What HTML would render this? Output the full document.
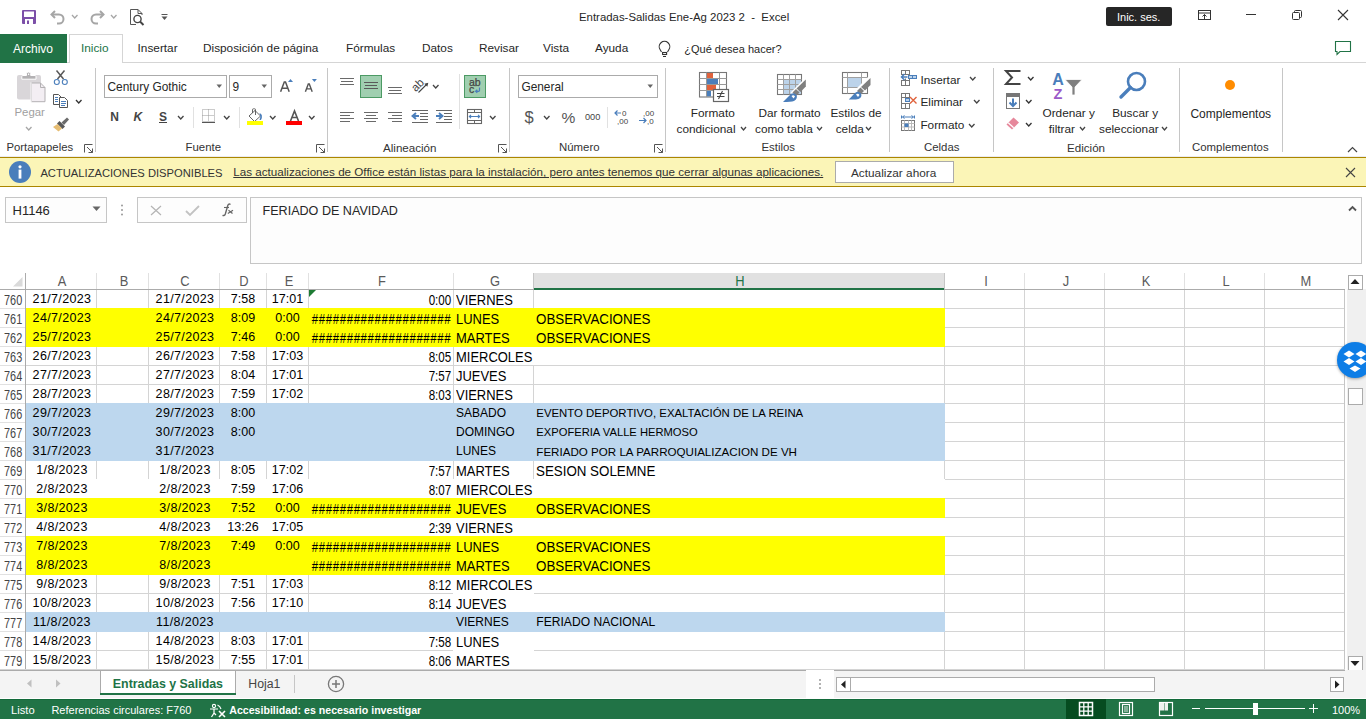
<!DOCTYPE html>
<html><head><meta charset="utf-8"><title>Excel</title>
<style>
html,body{margin:0;padding:0;}
body{width:1366px;height:719px;overflow:hidden;position:relative;background:#fff;font-family:"Liberation Sans", sans-serif;}
.t{position:absolute;white-space:pre;line-height:1;}
.r{position:absolute;box-sizing:content-box;}
.s{position:absolute;overflow:visible;}
</style></head><body>
<div class="r" style="left:0px;top:0px;width:1366px;height:34px;background:#ffffff;"></div>
<svg class="s" style="left:22px;top:10px" width="14" height="14" viewBox="0 0 14 14"><rect x="0" y="0" width="14" height="14" rx="1" fill="#7c4fa8"/><rect x="2" y="1.5" width="10" height="5.5" fill="#fff"/><rect x="3" y="9" width="8" height="5" fill="#fff"/><rect x="5" y="10.5" width="2" height="3.5" fill="#7c4fa8"/></svg>
<svg class="s" style="left:50px;top:9px" width="16" height="15" viewBox="0 0 16 15"><path d="M5 2 L1.5 5.5 L5 9" fill="none" stroke="#a6a6a6" stroke-width="2"/><path d="M2 5.5 H9 A4.5 4.5 0 0 1 9 14.5 H7" fill="none" stroke="#a6a6a6" stroke-width="2"/></svg>
<svg class="s" style="left:71px;top:14px" width="7.5" height="5" viewBox="0 0 7.5 5"><polyline points="1,1 3.75,4 6.5,1" fill="none" stroke="#a6a6a6" stroke-width="1.3"/></svg>
<svg class="s" style="left:89px;top:9px" width="16" height="15" viewBox="0 0 16 15"><path d="M11 2 L14.5 5.5 L11 9" fill="none" stroke="#a6a6a6" stroke-width="2"/><path d="M14 5.5 H7 A4.5 4.5 0 0 0 7 14.5 H9" fill="none" stroke="#a6a6a6" stroke-width="2"/></svg>
<svg class="s" style="left:110px;top:14px" width="7.5" height="5" viewBox="0 0 7.5 5"><polyline points="1,1 3.75,4 6.5,1" fill="none" stroke="#a6a6a6" stroke-width="1.3"/></svg>
<svg class="s" style="left:129px;top:8px" width="17" height="18" viewBox="0 0 17 18"><path d="M1.5 1.5 H9 L13 5.5 V7 M1.5 1.5 V16.5 H7" fill="none" stroke="#555" stroke-width="1"/><path d="M9 1.5 V5.5 H13" fill="none" stroke="#555" stroke-width="1"/><circle cx="8.5" cy="11" r="3.6" fill="none" stroke="#444" stroke-width="1.4"/><path d="M11 13.5 L14.5 17" stroke="#444" stroke-width="2"/></svg>
<svg class="s" style="left:161px;top:13px" width="8" height="8" viewBox="0 0 8 8"><rect x="0.5" y="1" width="6" height="1" fill="#555"/><path d="M0.5 3.5 H6.5 L3.5 7 Z" fill="#555"/></svg>
<div class="t" style="left:579px;top:11.65px;font-size:11.4px;color:#262626;">Entradas-Salidas Ene-Ag 2023 2  -  Excel</div>
<div class="r" style="left:1106px;top:7px;width:66px;height:19px;background:#262626;border-radius:2px;"></div>
<div class="t" style="left:1117px;top:11.69px;font-size:11px;color:#ffffff;">Inic. ses.</div>
<svg class="s" style="left:1197px;top:9px" width="15" height="12" viewBox="0 0 15 12"><rect x="1.5" y="1.5" width="12" height="9" fill="none" stroke="#333" stroke-width="1"/><line x1="1.5" y1="4" x2="13.5" y2="4" stroke="#333"/><path d="M7.5 10 V5.5 M5.5 7.5 L7.5 5.5 L9.5 7.5" fill="none" stroke="#333"/></svg>
<div class="r" style="left:1246px;top:14px;width:10px;height:1px;background:#333;"></div>
<svg class="s" style="left:1291px;top:9px" width="12" height="12" viewBox="0 0 12 12"><rect x="1.5" y="3.5" width="7" height="7" rx="1" fill="none" stroke="#333"/><path d="M3.5 3.5 V2.5 A1 1 0 0 1 4.5 1.5 H9.5 A1 1 0 0 1 10.5 2.5 V7.5 A1 1 0 0 1 9.5 8.5 H8.5" fill="none" stroke="#333"/></svg>
<svg class="s" style="left:1337px;top:9px" width="12" height="12" viewBox="0 0 12 12"><path d="M1 1 L11 11 M11 1 L1 11" stroke="#333" stroke-width="1.1"/></svg>
<div class="r" style="left:0px;top:34px;width:1366px;height:29px;background:#ffffff;"></div>
<div class="r" style="left:0px;top:62px;width:1366px;height:1px;background:#d5d5d5;"></div>
<div class="r" style="left:0px;top:34px;width:67px;height:29px;background:#217346;"></div>
<div class="t" style="left:13px;top:42.84px;font-size:12px;color:#ffffff;">Archivo</div>
<div class="r" style="left:69px;top:34px;width:52px;height:29px;background:#fff;border:1px solid #d5d5d5;border-bottom:none;"></div>
<div class="t" style="left:81px;top:43.01px;font-size:11.8px;color:#217346;">Inicio</div>
<div class="t" style="left:137.6px;top:43.01px;font-size:11.8px;color:#262626;">Insertar</div>
<div class="t" style="left:203px;top:43.01px;font-size:11.8px;color:#262626;">Disposición de página</div>
<div class="t" style="left:346px;top:43.01px;font-size:11.8px;color:#262626;">Fórmulas</div>
<div class="t" style="left:422px;top:43.01px;font-size:11.8px;color:#262626;">Datos</div>
<div class="t" style="left:479px;top:43.01px;font-size:11.8px;color:#262626;">Revisar</div>
<div class="t" style="left:543px;top:43.01px;font-size:11.8px;color:#262626;">Vista</div>
<div class="t" style="left:595px;top:43.01px;font-size:11.8px;color:#262626;">Ayuda</div>
<svg class="s" style="left:656px;top:40px" width="18" height="18" viewBox="0 0 18 18"><path d="M5.5 12 L4.2 9.8 A5.3 5.3 0 1 1 12.8 9.8 L11.5 12" fill="none" stroke="#333" stroke-width="1.1"/><rect x="6.6" y="12.5" width="4" height="2" fill="none" stroke="#333" stroke-width="1.1"/><rect x="7" y="16" width="3" height="1" fill="#333"/></svg>
<div class="t" style="left:684.3px;top:43.69px;font-size:11px;color:#262626;">¿Qué desea hacer?</div>
<svg class="s" style="left:1334px;top:40px" width="18" height="16" viewBox="0 0 18 16"><path d="M1.5 1.5 H16.5 V11.5 H6 L3 14.5 V11.5 H1.5 Z" fill="none" stroke="#217346" stroke-width="1.1"/></svg>
<div class="r" style="left:0px;top:63px;width:1366px;height:93px;background:#ffffff;"></div>
<div class="r" style="left:95px;top:68px;width:1px;height:84px;background:#c6c6c6;"></div>
<div class="r" style="left:327px;top:68px;width:1px;height:84px;background:#c6c6c6;"></div>
<div class="r" style="left:509px;top:68px;width:1px;height:84px;background:#c6c6c6;"></div>
<div class="r" style="left:665px;top:68px;width:1px;height:84px;background:#c6c6c6;"></div>
<div class="r" style="left:889px;top:68px;width:1px;height:84px;background:#c6c6c6;"></div>
<div class="r" style="left:993px;top:68px;width:1px;height:84px;background:#c6c6c6;"></div>
<div class="r" style="left:1179px;top:68px;width:1px;height:84px;background:#c6c6c6;"></div>
<div class="r" style="left:1282px;top:68px;width:1px;height:84px;background:#c6c6c6;"></div>
<div class="t" style="left:6.5px;top:142.43px;font-size:11.3px;color:#333;">Portapapeles</div>
<svg class="s" style="left:84px;top:144px" width="9" height="9" viewBox="0 0 9 9"><path d="M0.5 0.5 H8.5 V8.5 H0.5 Z" fill="none" stroke="#666" stroke-width="0" /><path d="M0.5 8.5 V0.5 H8.5 M8.5 8.5 L3 3 M8.5 4.5 V8.5 H4.5" fill="none" stroke="#555" stroke-width="1"/></svg>
<div class="t" style="left:185.5px;top:142.35px;font-size:11.4px;color:#333;">Fuente</div>
<svg class="s" style="left:316px;top:144px" width="9" height="9" viewBox="0 0 9 9"><path d="M0.5 0.5 H8.5 V8.5 H0.5 Z" fill="none" stroke="#666" stroke-width="0" /><path d="M0.5 8.5 V0.5 H8.5 M8.5 8.5 L3 3 M8.5 4.5 V8.5 H4.5" fill="none" stroke="#555" stroke-width="1"/></svg>
<div class="t" style="left:383px;top:142.18px;font-size:11.6px;color:#333;">Alineación</div>
<svg class="s" style="left:498px;top:144px" width="9" height="9" viewBox="0 0 9 9"><path d="M0.5 0.5 H8.5 V8.5 H0.5 Z" fill="none" stroke="#666" stroke-width="0" /><path d="M0.5 8.5 V0.5 H8.5 M8.5 8.5 L3 3 M8.5 4.5 V8.5 H4.5" fill="none" stroke="#555" stroke-width="1"/></svg>
<div class="t" style="left:559px;top:142.35px;font-size:11.4px;color:#333;">Número</div>
<svg class="s" style="left:654px;top:144px" width="9" height="9" viewBox="0 0 9 9"><path d="M0.5 0.5 H8.5 V8.5 H0.5 Z" fill="none" stroke="#666" stroke-width="0" /><path d="M0.5 8.5 V0.5 H8.5 M8.5 8.5 L3 3 M8.5 4.5 V8.5 H4.5" fill="none" stroke="#555" stroke-width="1"/></svg>
<div class="t" style="left:761.5px;top:142.35px;font-size:11.4px;color:#333;">Estilos</div>
<div class="t" style="left:924px;top:142.35px;font-size:11.4px;color:#333;">Celdas</div>
<div class="t" style="left:1067px;top:142.18px;font-size:11.6px;color:#333;">Edición</div>
<div class="t" style="left:1192px;top:142.35px;font-size:11.4px;color:#333;">Complementos</div>
<svg class="s" style="left:1347px;top:146px" width="11" height="7" viewBox="0 0 11 7"><polyline points="1,6 5.5,1.5 10,6" fill="none" stroke="#444" stroke-width="1.2"/></svg>
<svg class="s" style="left:16px;top:71px" width="31" height="32" viewBox="0 0 31 32"><rect x="1" y="4" width="24" height="24.6" rx="2" fill="#d9d6d9"/><path d="M5.8 8.2 V5.5 Q5.8 4.5 6.8 4.5 H10.5 V2.5 Q10.5 1 12.5 1 Q14.7 1 14.7 2.5 V4.5 H19 Q20 4.5 20 5.5 V8.2 Z" fill="#b3b1b3" stroke="#fff" stroke-width="1"/><rect x="12" y="2.5" width="1.2" height="1.5" fill="#fff"/><path d="M15.3 12 H24.5 L29 16.5 V30.7 H15.3 Z" fill="#f3eef3" stroke="#b3b1b3" stroke-width="1"/><path d="M24.5 12 V16.5 H29" fill="none" stroke="#b3b1b3" stroke-width="1"/><path d="M15 11.5 V31" stroke="#fff" stroke-width="1"/></svg>
<div class="t" style="left:14.5px;top:107.35px;font-size:11.4px;color:#a0a0a0;">Pegar</div>
<svg class="s" style="left:25px;top:126px" width="7.5" height="5" viewBox="0 0 7.5 5"><polyline points="1,1 3.75,4 6.5,1" fill="none" stroke="#a6a6a6" stroke-width="1.3"/></svg>
<svg class="s" style="left:53px;top:69px" width="15" height="16" viewBox="0 0 15 16"><path d="M3.5 1.5 L10.5 10 M11.5 1.5 L4.5 10" stroke="#595959" stroke-width="1.5"/><circle cx="3.8" cy="13" r="2.5" fill="#fff" stroke="#4a7ebb" stroke-width="1.1"/><circle cx="11.8" cy="13" r="2.5" fill="#fff" stroke="#4a7ebb" stroke-width="1.1"/></svg>
<svg class="s" style="left:52px;top:93px" width="17" height="16" viewBox="0 0 17 16"><path d="M1.5 1.5 H6.5 L9.5 4.5 V11.5 H1.5 Z" fill="#fff" stroke="#555" stroke-width="1"/><path d="M7.5 4.5 H12.5 L15.5 7.5 V14.5 H7.5 Z" fill="#fff" stroke="#555" stroke-width="1"/><rect x="3" y="4" width="3" height="1" fill="#4a7ebb"/><rect x="3" y="6" width="3" height="1" fill="#4a7ebb"/><rect x="3" y="8" width="3" height="1" fill="#4a7ebb"/><rect x="9" y="8" width="5" height="1" fill="#4a7ebb"/><rect x="9" y="10" width="5" height="1" fill="#4a7ebb"/><rect x="9" y="12" width="4" height="1" fill="#4a7ebb"/></svg>
<svg class="s" style="left:75px;top:99px" width="7.5" height="5" viewBox="0 0 7.5 5"><polyline points="1,1 3.75,4 6.5,1" fill="none" stroke="#333" stroke-width="1.3"/></svg>
<svg class="s" style="left:52px;top:116px" width="18" height="16" viewBox="0 0 18 16"><path d="M9.5 6.5 L15 1.5 L17 3.5 L12 9 Z" fill="#6b6b6b"/><path d="M7.5 5 L13 10.5 L10.5 13 L5 7.5 Z" fill="#595959"/><path d="M5.5 8 L10 12.5 L6.5 15.5 L1 11 Z" fill="#e6bd73"/></svg>
<div class="r" style="left:104px;top:75px;width:121px;height:21px;border:1px solid #ababab;background:#fff"></div>
<div class="t" style="left:107.5px;top:81.93px;font-size:11.9px;color:#262626;">Century Gothic</div>
<svg class="s" style="left:216px;top:84px" width="7" height="5" viewBox="0 0 7 5"><path d="M0.5 0.5 H6 L3.25 4 Z" fill="#666"/></svg>
<div class="r" style="left:229px;top:75px;width:41px;height:21px;border:1px solid #ababab;background:#fff"></div>
<div class="t" style="left:232.5px;top:81.93px;font-size:11.9px;color:#262626;">9</div>
<svg class="s" style="left:261px;top:84px" width="7" height="5" viewBox="0 0 7 5"><path d="M0.5 0.5 H6 L3.25 4 Z" fill="#666"/></svg>
<svg class="s" style="left:279px;top:77px" width="16" height="17" viewBox="0 0 16 17"><path d="M1.6 14.7 L5.3 5 H6.5 L10.2 14.7 M3.3 11.3 H8.5" fill="none" stroke="#555" stroke-width="1.5"/><path d="M9 5 L11.5 1.9 L14 5 Z" fill="#4a7ebb"/></svg>
<svg class="s" style="left:304px;top:77px" width="16" height="17" viewBox="0 0 16 17"><path d="M1.4 14.7 L4.3 7 H5.3 L8.2 14.7 M2.8 11.9 H6.8" fill="none" stroke="#555" stroke-width="1.4"/><path d="M7.9 2 H12.9 L10.4 5 Z" fill="#4a7ebb"/></svg>
<div class="t" style="left:110.3px;top:110.84px;font-size:12px;color:#444;font-weight:bold;">N</div>
<div class="t" style="left:133.5px;top:110.84px;font-size:12px;color:#444;font-weight:bold;font-style:italic;">K</div>
<div class="t" style="left:159px;top:110.84px;font-size:12px;color:#444;font-weight:bold;text-decoration:underline;">S</div>
<svg class="s" style="left:176.5px;top:115px" width="7.5" height="5" viewBox="0 0 7.5 5"><polyline points="1,1 3.75,4 6.5,1" fill="none" stroke="#444" stroke-width="1.3"/></svg>
<div class="r" style="left:193px;top:107px;width:1px;height:21px;background:#e1e1e1;"></div>
<svg class="s" style="left:201px;top:108px" width="16" height="16" viewBox="0 0 16 16"><rect x="1.5" y="1.5" width="12" height="12" fill="none" stroke="#999" stroke-dasharray="1,1"/><path d="M7.5 1.5 V13.5 M1.5 7.5 H13.5" stroke="#999" stroke-dasharray="1,1"/><line x1="1" y1="14.5" x2="14" y2="14.5" stroke="#555"/></svg>
<svg class="s" style="left:223px;top:115px" width="7.5" height="5" viewBox="0 0 7.5 5"><polyline points="1,1 3.75,4 6.5,1" fill="none" stroke="#444" stroke-width="1.3"/></svg>
<div class="r" style="left:239px;top:107px;width:1px;height:21px;background:#e1e1e1;"></div>
<svg class="s" style="left:246px;top:107px" width="19" height="19" viewBox="0 0 19 19"><path d="M9 3.5 L14.5 9 L8.5 14.5 L3 9 Z" fill="#fff" stroke="#555" stroke-width="0.9"/><path d="M6.5 6 V2.5 Q6.5 1.8 7.5 1.8 H8.5 Q9.5 1.8 9.5 2.5 V8" fill="none" stroke="#555" stroke-width="0.9"/><path d="M13.5 6 Q17.5 7.5 15 13 L13.5 13 Q15 10 13.5 6 Z" fill="#4a7ebb"/><rect x="1" y="14" width="16" height="4" fill="#ffff00"/></svg>
<svg class="s" style="left:269px;top:115px" width="7.5" height="5" viewBox="0 0 7.5 5"><polyline points="1,1 3.75,4 6.5,1" fill="none" stroke="#444" stroke-width="1.3"/></svg>
<svg class="s" style="left:285px;top:109px" width="18" height="17" viewBox="0 0 18 17"><path d="M5.5 12 L9.5 2 L13.5 12 M7 8.5 H12" fill="none" stroke="#555" stroke-width="1.6"/><rect x="1" y="12" width="16" height="4" fill="#ff0000"/></svg>
<svg class="s" style="left:307.5px;top:115px" width="7.5" height="5" viewBox="0 0 7.5 5"><polyline points="1,1 3.75,4 6.5,1" fill="none" stroke="#444" stroke-width="1.3"/></svg>
<div class="r" style="left:340px;top:78px;width:14px;height:1px;background:#6a6a6a;"></div>
<div class="r" style="left:341px;top:81px;width:12px;height:1px;background:#6a6a6a;"></div>
<div class="r" style="left:340px;top:84px;width:14px;height:1px;background:#6a6a6a;"></div>
<div class="r" style="left:360px;top:75px;width:20px;height:21px;background:#a0cfb0;border:1px solid #4c9a64"></div>
<div class="r" style="left:364px;top:82px;width:14px;height:1px;background:#5a5a5a;"></div>
<div class="r" style="left:365px;top:85px;width:12px;height:1px;background:#5a5a5a;"></div>
<div class="r" style="left:364px;top:88px;width:14px;height:1px;background:#5a5a5a;"></div>
<div class="r" style="left:388px;top:87px;width:14px;height:1px;background:#6a6a6a;"></div>
<div class="r" style="left:389px;top:90px;width:12px;height:1px;background:#6a6a6a;"></div>
<div class="r" style="left:388px;top:93px;width:14px;height:1px;background:#6a6a6a;"></div>
<svg class="s" style="left:410px;top:77px" width="22" height="17" viewBox="0 0 22 17"><text x="7.5" y="11.5" text-anchor="middle" font-family="Liberation Sans" font-size="11.5" fill="#444" transform="rotate(-45 7.8 7.8)">ab</text><path d="M8.5 15.5 L17 7" stroke="#444" stroke-width="1.1"/><path d="M18.3 5.8 L14.3 6.8 L17.3 9.8 Z" fill="#444"/></svg>
<svg class="s" style="left:432px;top:84px" width="7.5" height="5" viewBox="0 0 7.5 5"><polyline points="1,1 3.75,4 6.5,1" fill="none" stroke="#444" stroke-width="1.3"/></svg>
<div class="r" style="left:459px;top:74px;width:1px;height:55px;background:#e1e1e1;"></div>
<div class="r" style="left:464px;top:75px;width:20px;height:21px;background:#a0cfb0;border:1px solid #4c9a64"></div>
<svg class="s" style="left:466px;top:77px" width="18" height="18" viewBox="0 0 18 18"><text x="3" y="8.5" font-family="Liberation Sans" font-size="10.5" fill="#444" stroke="#444" stroke-width="0.25">ab</text><text x="3" y="16" font-family="Liberation Sans" font-size="10.5" fill="#444" stroke="#444" stroke-width="0.25">c</text><path d="M13.5 10.5 V13.5 Q13.5 14.3 12.5 14.3 H9.8 M11.3 12.8 L9.6 14.3 L11.3 15.8" fill="none" stroke="#4a7ebb" stroke-width="1.2"/></svg>
<div class="r" style="left:340px;top:112px;width:14px;height:1px;background:#6a6a6a;"></div>
<div class="r" style="left:340px;top:115px;width:10px;height:1px;background:#6a6a6a;"></div>
<div class="r" style="left:340px;top:118px;width:14px;height:1px;background:#6a6a6a;"></div>
<div class="r" style="left:340px;top:121px;width:10px;height:1px;background:#6a6a6a;"></div>
<div class="r" style="left:364px;top:112px;width:14px;height:1px;background:#6a6a6a;"></div>
<div class="r" style="left:366px;top:115px;width:10px;height:1px;background:#6a6a6a;"></div>
<div class="r" style="left:364px;top:118px;width:14px;height:1px;background:#6a6a6a;"></div>
<div class="r" style="left:366px;top:121px;width:10px;height:1px;background:#6a6a6a;"></div>
<div class="r" style="left:388px;top:112px;width:14px;height:1px;background:#6a6a6a;"></div>
<div class="r" style="left:392px;top:115px;width:10px;height:1px;background:#6a6a6a;"></div>
<div class="r" style="left:388px;top:118px;width:14px;height:1px;background:#6a6a6a;"></div>
<div class="r" style="left:392px;top:121px;width:10px;height:1px;background:#6a6a6a;"></div>
<div class="r" style="left:412px;top:110px;width:16px;height:1px;background:#666;"></div>
<div class="r" style="left:420px;top:113px;width:8px;height:1px;background:#666;"></div>
<div class="r" style="left:420px;top:116px;width:8px;height:1px;background:#666;"></div>
<div class="r" style="left:420px;top:119px;width:8px;height:1px;background:#666;"></div>
<div class="r" style="left:412px;top:122px;width:16px;height:1px;background:#666;"></div>
<svg class="s" style="left:411px;top:111px" width="9" height="10" viewBox="0 0 9 10"><path d="M8 5 H3 M5 2 L1.5 5 L5 8" fill="none" stroke="#4a7ebb" stroke-width="1.9"/></svg>
<div class="r" style="left:436px;top:110px;width:16px;height:1px;background:#666;"></div>
<div class="r" style="left:444px;top:113px;width:8px;height:1px;background:#666;"></div>
<div class="r" style="left:444px;top:116px;width:8px;height:1px;background:#666;"></div>
<div class="r" style="left:444px;top:119px;width:8px;height:1px;background:#666;"></div>
<div class="r" style="left:436px;top:122px;width:16px;height:1px;background:#666;"></div>
<svg class="s" style="left:435px;top:111px" width="9" height="10" viewBox="0 0 9 10"><path d="M1 5 H6 M4 2 L7.5 5 L4 8" fill="none" stroke="#4a7ebb" stroke-width="1.9"/></svg>
<svg class="s" style="left:466px;top:108px" width="17" height="17" viewBox="0 0 17 17"><rect x="1.5" y="1.5" width="14" height="14" fill="#fff" stroke="#666" stroke-width="1.1"/><path d="M1.5 4.5 H15.5 M1.5 12.5 H15.5 M8.5 1.5 V4.5 M8.5 12.5 V15.5" stroke="#666" stroke-width="1"/><path d="M3.5 8.5 H13.5 M5 6.8 L3.3 8.5 L5 10.2 M12 6.8 L13.7 8.5 L12 10.2" fill="none" stroke="#4a7ebb" stroke-width="1.1"/></svg>
<svg class="s" style="left:489px;top:115px" width="7.5" height="5" viewBox="0 0 7.5 5"><polyline points="1,1 3.75,4 6.5,1" fill="none" stroke="#444" stroke-width="1.3"/></svg>
<div class="r" style="left:518px;top:75px;width:138px;height:21px;border:1px solid #ababab;background:#fff"></div>
<div class="t" style="left:521.4px;top:81.93px;font-size:11.9px;color:#262626;">General</div>
<svg class="s" style="left:647px;top:84px" width="7" height="5" viewBox="0 0 7 5"><path d="M0.5 0.5 H6 L3.25 4 Z" fill="#666"/></svg>
<div class="t" style="left:524.5px;top:108.53px;font-size:16.5px;color:#555;">$</div>
<svg class="s" style="left:542.5px;top:115px" width="7.5" height="5" viewBox="0 0 7.5 5"><polyline points="1,1 3.75,4 6.5,1" fill="none" stroke="#444" stroke-width="1.3"/></svg>
<div class="t" style="left:561.5px;top:109.88px;font-size:15.5px;color:#555;">%</div>
<div class="t" style="left:585px;top:113.01px;font-size:9.2px;color:#444;">000</div>
<div class="r" style="left:607px;top:107px;width:1px;height:21px;background:#e1e1e1;"></div>
<svg class="s" style="left:614px;top:109px" width="17" height="16" viewBox="0 0 17 16"><text x="8" y="7" font-family="Liberation Sans" font-size="8" fill="#444">0</text><text x="3" y="14.5" font-family="Liberation Sans" font-size="8" fill="#444">,00</text><path d="M1 4 H7 M3.5 1.5 L1 4 L3.5 6.5" fill="none" stroke="#4a7ebb" stroke-width="1.2"/></svg>
<svg class="s" style="left:638px;top:109px" width="17" height="16" viewBox="0 0 17 16"><text x="5" y="7" font-family="Liberation Sans" font-size="8" fill="#444">,00</text><text x="9" y="14.5" font-family="Liberation Sans" font-size="8" fill="#444">,0</text><path d="M1 11.5 H8 M5.5 9 L8 11.5 L5.5 14" fill="none" stroke="#4a7ebb" stroke-width="1.2"/></svg>
<svg class="s" style="left:698px;top:71px" width="32" height="32" viewBox="0 0 32 32"><rect x="9" y="2" width="6" height="5.5" fill="#e0623c"/><rect x="9" y="8" width="11" height="5.5" fill="#4a7ebb"/><rect x="9" y="14" width="9" height="5.5" fill="#e0623c"/><rect x="9" y="20" width="4" height="5.5" fill="#4a7ebb"/><rect x="1.5" y="1.5" width="27" height="24.5" fill="none" stroke="#777" stroke-width="1.1"/><path d="M1.5 7.5 H28.5 M1.5 13.5 H28.5 M1.5 19.5 H28.5 M8.5 1.5 V26 M21.5 1.5 V26" stroke="#999" stroke-width="1" fill="none"/><rect x="15.5" y="18.5" width="15" height="12" fill="#fff" stroke="#666" stroke-width="1.2"/><path d="M19 22.5 H26.5 M19 25.5 H26.5 M24.5 20 L20.5 28" stroke="#444" stroke-width="1.1"/></svg>
<div class="t" style="left:690.8px;top:108.01px;font-size:11.8px;color:#262626;">Formato</div>
<div class="t" style="left:676.5px;top:124.01px;font-size:11.8px;color:#262626;">condicional</div>
<svg class="s" style="left:740px;top:126px" width="7" height="5" viewBox="0 0 7 5"><polyline points="1,1 3.5,4 6,1" fill="none" stroke="#444" stroke-width="1.3"/></svg>
<svg class="s" style="left:776px;top:72px" width="32" height="31" viewBox="0 0 32 31"><rect x="8" y="8" width="17" height="14" fill="#bcd3ea"/><rect x="1.5" y="2.5" width="24" height="20" fill="none" stroke="#777" stroke-width="1.1"/><path d="M1.5 7.5 H25.5 M1.5 12.5 H25.5 M1.5 17.5 H25.5 M7.5 2.5 V22.5 M13.5 2.5 V22.5 M19.5 2.5 V22.5" stroke="#a0a0a0" fill="none"/><path d="M16 22 L31 7" stroke="#fff" stroke-width="4"/><path d="M29.8 7.5 V14.5 L24.5 20 L20.5 16.5 Z" fill="#7f7f7f"/><path d="M23.5 20.5 L20 24 L16.5 20.5 L20 17 Z" fill="#7f7f7f"/><path d="M7 30 L14.5 22.5 Q18 20 20.5 23 Q22 26.5 18 29 Q15 30 7 30 Z" fill="#4a7ebb"/><path d="M15.5 24 Q17.5 22.5 19 24.5 L17.5 26.5 Z" fill="#fff"/></svg>
<div class="t" style="left:758.4px;top:108.01px;font-size:11.8px;color:#262626;">Dar formato</div>
<div class="t" style="left:755px;top:124.01px;font-size:11.8px;color:#262626;">como tabla</div>
<svg class="s" style="left:816px;top:126px" width="7" height="5" viewBox="0 0 7 5"><polyline points="1,1 3.5,4 6,1" fill="none" stroke="#444" stroke-width="1.3"/></svg>
<svg class="s" style="left:841px;top:71px" width="31" height="30" viewBox="0 0 31 30"><rect x="7" y="7" width="13" height="9" fill="#bcd3ea"/><rect x="1.5" y="1.5" width="25" height="21" fill="none" stroke="#777" stroke-width="1.1"/><path d="M1.5 6.5 H26.5 M1.5 16.5 H26.5 M6.5 1.5 V22.5 M20.5 1.5 V22.5" stroke="#a0a0a0" fill="none"/><path d="M15 21 L30 6" stroke="#fff" stroke-width="4"/><path d="M29.5 7 V14 L24 19.5 L20 16 Z" fill="#7f7f7f"/><path d="M23 20 L19.5 23.5 L16 20 L19.5 16.5 Z" fill="#7f7f7f"/><path d="M7.8 28.5 L14 22 Q17.5 19.5 20 22.5 Q21.5 26 17.5 28 Q14.5 28.8 7.8 28.5 Z" fill="#4a7ebb"/><path d="M15 23.5 Q17 22 18.5 24 L17 26 Z" fill="#fff"/></svg>
<div class="t" style="left:830.5px;top:108.01px;font-size:11.8px;color:#262626;">Estilos de</div>
<div class="t" style="left:835.7px;top:124.01px;font-size:11.8px;color:#262626;">celda</div>
<svg class="s" style="left:865px;top:126px" width="7" height="5" viewBox="0 0 7 5"><polyline points="1,1 3.5,4 6,1" fill="none" stroke="#444" stroke-width="1.3"/></svg>
<svg class="s" style="left:900px;top:69px" width="18" height="18" viewBox="0 0 18 18"><g fill="none" stroke="#777" stroke-width="1"><rect x="1.5" y="1.5" width="4" height="4"/><rect x="5.5" y="1.5" width="4" height="4"/><rect x="1.5" y="11.5" width="4" height="5"/><rect x="5.5" y="11.5" width="4" height="5"/><path d="M5.5 9.5 V11.5 M9.5 9.5 V11.5"/></g><rect x="8.5" y="6.5" width="8" height="3" fill="#bcd3ea" stroke="#4a7ebb" stroke-width="1"/><path d="M12.5 6.5 V9.5" stroke="#4a7ebb"/><path d="M1.5 8 H7.5 M4.5 5 L1.5 8 L4.5 11" fill="none" stroke="#4a7ebb" stroke-width="1.5"/></svg>
<div class="t" style="left:920.4px;top:74.51px;font-size:11.8px;color:#262626;">Insertar</div>
<svg class="s" style="left:969px;top:76px" width="7.5" height="5" viewBox="0 0 7.5 5"><polyline points="1,1 3.75,4 6.5,1" fill="none" stroke="#444" stroke-width="1.3"/></svg>
<svg class="s" style="left:900px;top:92px" width="18" height="18" viewBox="0 0 18 18"><g fill="none" stroke="#777" stroke-width="1"><rect x="1.5" y="1.5" width="4" height="4"/><rect x="5.5" y="1.5" width="4" height="4"/><rect x="1.5" y="11.5" width="4" height="5"/><rect x="5.5" y="11.5" width="4" height="5"/><path d="M1.5 5.5 V11.5"/></g><rect x="5.5" y="6.5" width="4" height="3" fill="#bcd3ea" stroke="#4a7ebb" stroke-width="1"/><path d="M10 5 L16.5 11.5 M16.5 5 L10 11.5" stroke="#e0623c" stroke-width="1.4"/></svg>
<div class="t" style="left:920.4px;top:97.21px;font-size:11.8px;color:#262626;">Eliminar</div>
<svg class="s" style="left:973px;top:99px" width="7.5" height="5" viewBox="0 0 7.5 5"><polyline points="1,1 3.75,4 6.5,1" fill="none" stroke="#444" stroke-width="1.3"/></svg>
<svg class="s" style="left:900px;top:115px" width="17" height="18" viewBox="0 0 17 18"><path d="M1.5 0.5 V3.5 M14.5 0.5 V3.5 M2.5 2 H13.5 M4.5 0.5 L2.5 2 L4.5 3.5 M11.5 0.5 L13.5 2 L11.5 3.5" fill="none" stroke="#4a7ebb" stroke-width="1"/><rect x="1.5" y="5.5" width="13" height="10" fill="#fff" stroke="#777"/><path d="M1.5 8.5 H14.5 M1.5 12 H14.5 M4.5 5.5 V15.5 M8.5 5.5 V15.5 M11.5 5.5 V15.5" stroke="#bbb"/><rect x="4.5" y="8.5" width="4" height="3.5" fill="#4a7ebb"/></svg>
<div class="t" style="left:920.4px;top:120.01px;font-size:11.8px;color:#262626;">Formato</div>
<svg class="s" style="left:967.5px;top:123px" width="7.5" height="5" viewBox="0 0 7.5 5"><polyline points="1,1 3.75,4 6.5,1" fill="none" stroke="#444" stroke-width="1.3"/></svg>
<svg class="s" style="left:1004px;top:69px" width="18" height="17" viewBox="0 0 18 17"><path d="M16.5 2 H2 L8 8.5 L2 15 H16.5" fill="none" stroke="#444" stroke-width="2"/></svg>
<svg class="s" style="left:1027px;top:76px" width="7.5" height="5" viewBox="0 0 7.5 5"><polyline points="1,1 3.75,4 6.5,1" fill="none" stroke="#333" stroke-width="1.3"/></svg>
<svg class="s" style="left:1005px;top:92px" width="16" height="18" viewBox="0 0 16 18"><rect x="1.5" y="1.5" width="13" height="15" fill="#fff" stroke="#777" stroke-width="1"/><rect x="1" y="1" width="14" height="4" fill="#777"/><path d="M8 6.5 V14 M4.5 10.5 L8 14 L11.5 10.5" fill="none" stroke="#4a7ebb" stroke-width="2"/></svg>
<svg class="s" style="left:1025px;top:99px" width="7.5" height="5" viewBox="0 0 7.5 5"><polyline points="1,1 3.75,4 6.5,1" fill="none" stroke="#333" stroke-width="1.3"/></svg>
<svg class="s" style="left:1005px;top:116px" width="16" height="15" viewBox="0 0 16 15"><path d="M8.5 1.5 L14 6.5 L7 13.5 L1.5 8.5 Z" fill="#e6879b"/><path d="M3.2 6.8 L8.7 11.8" stroke="#fff" stroke-width="1.2"/></svg>
<svg class="s" style="left:1025px;top:122px" width="7.5" height="5" viewBox="0 0 7.5 5"><polyline points="1,1 3.75,4 6.5,1" fill="none" stroke="#333" stroke-width="1.3"/></svg>
<svg class="s" style="left:1052px;top:72px" width="32" height="28" viewBox="0 0 32 28"><text x="0.3" y="13.2" font-family="Liberation Sans" font-weight="bold" font-size="16" fill="#4a7ebb">A</text><text x="1.5" y="27" font-family="Liberation Sans" font-weight="bold" font-size="14.5" fill="#9b59c8">Z</text><path d="M13 7.5 H30 L23 15 V23 H20 V15 Z" fill="#7f7f7f" stroke="#fff" stroke-width="0.8"/></svg>
<div class="t" style="left:1042.5px;top:108.01px;font-size:11.8px;color:#262626;">Ordenar y</div>
<div class="t" style="left:1048.8px;top:124.01px;font-size:11.8px;color:#262626;">filtrar</div>
<svg class="s" style="left:1079px;top:126px" width="7" height="5" viewBox="0 0 7 5"><polyline points="1,1 3.5,4 6,1" fill="none" stroke="#444" stroke-width="1.3"/></svg>
<svg class="s" style="left:1118px;top:70px" width="32" height="31" viewBox="0 0 32 31"><circle cx="18.5" cy="11.5" r="8.5" fill="none" stroke="#4a7ebb" stroke-width="2.6"/><path d="M12.5 17.5 L3 27" stroke="#4a7ebb" stroke-width="3.4" stroke-linecap="round"/></svg>
<div class="t" style="left:1112.2px;top:108.01px;font-size:11.8px;color:#262626;">Buscar y</div>
<div class="t" style="left:1099px;top:124.01px;font-size:11.8px;color:#262626;">seleccionar</div>
<svg class="s" style="left:1161px;top:126px" width="7" height="5" viewBox="0 0 7 5"><polyline points="1,1 3.5,4 6,1" fill="none" stroke="#444" stroke-width="1.3"/></svg>
<svg class="s" style="left:1224px;top:79px" width="12" height="12" viewBox="0 0 12 12"><circle cx="6" cy="6" r="5" fill="#ff8c00"/></svg>
<div class="t" style="left:1190.4px;top:107.84px;font-size:12px;color:#262626;">Complementos</div>
<div class="r" style="left:0px;top:156px;width:1366px;height:1px;background:#ebebf0;"></div>
<div class="r" style="left:0px;top:157px;width:1366px;height:30px;background:#fbf5b7;"></div>
<div class="r" style="left:0px;top:157px;width:1366px;height:1px;background:#ab8600;"></div>
<div class="r" style="left:0px;top:186px;width:1366px;height:1px;background:#ab8600;"></div>
<svg class="s" style="left:9px;top:161px" width="22" height="22" viewBox="0 0 22 22"><circle cx="11" cy="11" r="11" fill="#4a7ebb"/><circle cx="11" cy="5.8" r="1.6" fill="#fff"/><rect x="9.6" y="8.6" width="2.8" height="9" fill="#fff"/></svg>
<div class="t" style="left:40.4px;top:167.52px;font-size:11.2px;color:#333;">ACTUALIZACIONES DISPONIBLES</div>
<div class="t" style="left:233.3px;top:166.44px;font-size:11.65px;color:#333;text-decoration:underline;">Las actualizaciones de Office están listas para la instalación, pero antes tenemos que cerrar algunas aplicaciones.</div>
<div class="r" style="left:835px;top:161px;width:117px;height:20px;background:#fff;border:1px solid #ababab"></div>
<div class="t" style="left:851px;top:168.01px;font-size:11.8px;color:#333;">Actualizar ahora</div>
<svg class="s" style="left:1345px;top:167px" width="11" height="11" viewBox="0 0 11 11"><path d="M1 1 L10 10 M10 1 L1 10" stroke="#444" stroke-width="1.1"/></svg>
<div class="r" style="left:0px;top:187px;width:1366px;height:86px;background:#ffffff;"></div>
<div class="r" style="left:5px;top:197px;width:100px;height:24px;background:#fdfdfd;border:1px solid #c6c6c6"></div>
<div class="t" style="left:12.5px;top:204.40px;font-size:13px;color:#262626;">H1146</div>
<svg class="s" style="left:92px;top:206px" width="9" height="6" viewBox="0 0 9 6"><path d="M0.5 0.5 H8.5 L4.5 5 Z" fill="#666"/></svg>
<svg class="s" style="left:120px;top:204px" width="4" height="12" viewBox="0 0 4 12"><circle cx="2" cy="1.5" r="1" fill="#999"/><circle cx="2" cy="6" r="1" fill="#999"/><circle cx="2" cy="10.5" r="1" fill="#999"/></svg>
<div class="r" style="left:137px;top:197px;width:108px;height:24px;background:#fdfdfd;border:1px solid #c6c6c6"></div>
<svg class="s" style="left:150px;top:205px" width="12" height="11" viewBox="0 0 12 11"><path d="M1 1 L11 10 M11 1 L1 10" stroke="#b4b4b4" stroke-width="1.2"/></svg>
<svg class="s" style="left:185px;top:205px" width="15" height="11" viewBox="0 0 15 11"><path d="M1 6 L5 10 L14 1" fill="none" stroke="#c2c2c2" stroke-width="1.8"/></svg>
<svg class="s" style="left:220px;top:202px" width="16" height="16" viewBox="0 0 16 16"><path d="M10.5 2.5 Q8.7 1.3 7.8 3.5 L5.3 12 Q4.5 14.2 2.5 13.3" fill="none" stroke="#666" stroke-width="1.4"/><path d="M4 5.5 H9" stroke="#666" stroke-width="1.1"/><path d="M7.8 11.5 L13 8.2 M8.5 8.2 L12.5 11.5" stroke="#666" stroke-width="1.2"/></svg>
<div class="r" style="left:250px;top:197px;width:1110px;height:65px;background:#fdfdfd;border:1px solid #c6c6c6"></div>
<div class="t" style="left:262.5px;top:204.95px;font-size:12.58px;color:#262626;">FERIADO DE NAVIDAD</div>
<svg class="s" style="left:1348px;top:205px" width="9" height="7" viewBox="0 0 9 7"><polyline points="1,5.5 4.5,2 8,5.5" fill="none" stroke="#555" stroke-width="1.8"/></svg>
<div class="r" style="left:0px;top:273px;width:1344px;height:16px;background:#ffffff;"></div>
<div class="r" style="left:534px;top:273px;width:410px;height:15px;background:#e1e1e1;"></div>
<div class="r" style="left:534px;top:288px;width:410px;height:2px;background:#217346;"></div>
<div class="t" style="left:-238.0px;width:600px;text-align:center;top:274.35px;font-size:14px;color:#5a5a5a;transform:scaleX(0.92);transform-origin:center center;">A</div>
<div class="t" style="left:-176.5px;width:600px;text-align:center;top:274.35px;font-size:14px;color:#5a5a5a;transform:scaleX(0.92);transform-origin:center center;">B</div>
<div class="t" style="left:-115.0px;width:600px;text-align:center;top:274.35px;font-size:14px;color:#5a5a5a;transform:scaleX(0.92);transform-origin:center center;">C</div>
<div class="t" style="left:-56.0px;width:600px;text-align:center;top:274.35px;font-size:14px;color:#5a5a5a;transform:scaleX(0.92);transform-origin:center center;">D</div>
<div class="t" style="left:-11.5px;width:600px;text-align:center;top:274.35px;font-size:14px;color:#5a5a5a;transform:scaleX(0.92);transform-origin:center center;">E</div>
<div class="t" style="left:82.0px;width:600px;text-align:center;top:274.35px;font-size:14px;color:#5a5a5a;transform:scaleX(0.92);transform-origin:center center;">F</div>
<div class="t" style="left:194.5px;width:600px;text-align:center;top:274.35px;font-size:14px;color:#5a5a5a;transform:scaleX(0.92);transform-origin:center center;">G</div>
<div class="t" style="left:440.0px;width:600px;text-align:center;top:274.35px;font-size:14px;color:#217346;transform:scaleX(0.92);transform-origin:center center;">H</div>
<div class="t" style="left:685.5px;width:600px;text-align:center;top:274.35px;font-size:14px;color:#5a5a5a;transform:scaleX(0.92);transform-origin:center center;">I</div>
<div class="t" style="left:765.5px;width:600px;text-align:center;top:274.35px;font-size:14px;color:#5a5a5a;transform:scaleX(0.92);transform-origin:center center;">J</div>
<div class="t" style="left:845.5px;width:600px;text-align:center;top:274.35px;font-size:14px;color:#5a5a5a;transform:scaleX(0.92);transform-origin:center center;">K</div>
<div class="t" style="left:925.5px;width:600px;text-align:center;top:274.35px;font-size:14px;color:#5a5a5a;transform:scaleX(0.92);transform-origin:center center;">L</div>
<div class="t" style="left:1005.5px;width:600px;text-align:center;top:274.35px;font-size:14px;color:#5a5a5a;transform:scaleX(0.92);transform-origin:center center;">M</div>
<div class="r" style="left:96px;top:273px;width:1px;height:16px;background:#e1e1e1;"></div>
<div class="r" style="left:148px;top:273px;width:1px;height:16px;background:#e1e1e1;"></div>
<div class="r" style="left:219px;top:273px;width:1px;height:16px;background:#e1e1e1;"></div>
<div class="r" style="left:266px;top:273px;width:1px;height:16px;background:#e1e1e1;"></div>
<div class="r" style="left:308px;top:273px;width:1px;height:16px;background:#e1e1e1;"></div>
<div class="r" style="left:453px;top:273px;width:1px;height:16px;background:#e1e1e1;"></div>
<div class="r" style="left:533px;top:273px;width:1px;height:16px;background:#c6c6c6;"></div>
<div class="r" style="left:944px;top:273px;width:1px;height:16px;background:#c6c6c6;"></div>
<div class="r" style="left:1024px;top:273px;width:1px;height:16px;background:#e1e1e1;"></div>
<div class="r" style="left:1104px;top:273px;width:1px;height:16px;background:#e1e1e1;"></div>
<div class="r" style="left:1184px;top:273px;width:1px;height:16px;background:#e1e1e1;"></div>
<div class="r" style="left:1264px;top:273px;width:1px;height:16px;background:#e1e1e1;"></div>
<svg class="s" style="left:12px;top:276px" width="12" height="12" viewBox="0 0 12 12"><path d="M10.5 1 V10.5 H1 Z" fill="#dadada"/></svg>
<div class="r" style="left:0px;top:289px;width:534px;height:1px;background:#ababab;"></div>
<div class="r" style="left:944px;top:289px;width:401px;height:1px;background:#ababab;"></div>
<div class="r" style="left:0px;top:290px;width:25px;height:380px;background:#ffffff;"></div>
<div class="r" style="left:25px;top:273px;width:1px;height:397px;background:#ababab;"></div>
<div class="r" style="left:26px;top:290px;width:1318px;height:380px;background:#ffffff;"></div>
<div class="r" style="left:26px;top:308px;width:1318px;height:1px;background:#d4d4d4;"></div>
<div class="r" style="left:0px;top:308px;width:25px;height:1px;background:#e1e1e1;"></div>
<div class="r" style="left:26px;top:327px;width:1318px;height:1px;background:#d4d4d4;"></div>
<div class="r" style="left:0px;top:327px;width:25px;height:1px;background:#e1e1e1;"></div>
<div class="r" style="left:26px;top:346px;width:1318px;height:1px;background:#d4d4d4;"></div>
<div class="r" style="left:0px;top:346px;width:25px;height:1px;background:#e1e1e1;"></div>
<div class="r" style="left:26px;top:365px;width:1318px;height:1px;background:#d4d4d4;"></div>
<div class="r" style="left:0px;top:365px;width:25px;height:1px;background:#e1e1e1;"></div>
<div class="r" style="left:26px;top:384px;width:1318px;height:1px;background:#d4d4d4;"></div>
<div class="r" style="left:0px;top:384px;width:25px;height:1px;background:#e1e1e1;"></div>
<div class="r" style="left:26px;top:403px;width:1318px;height:1px;background:#d4d4d4;"></div>
<div class="r" style="left:0px;top:403px;width:25px;height:1px;background:#e1e1e1;"></div>
<div class="r" style="left:26px;top:422px;width:1318px;height:1px;background:#d4d4d4;"></div>
<div class="r" style="left:0px;top:422px;width:25px;height:1px;background:#e1e1e1;"></div>
<div class="r" style="left:26px;top:441px;width:1318px;height:1px;background:#d4d4d4;"></div>
<div class="r" style="left:0px;top:441px;width:25px;height:1px;background:#e1e1e1;"></div>
<div class="r" style="left:26px;top:460px;width:1318px;height:1px;background:#d4d4d4;"></div>
<div class="r" style="left:0px;top:460px;width:25px;height:1px;background:#e1e1e1;"></div>
<div class="r" style="left:26px;top:479px;width:1318px;height:1px;background:#d4d4d4;"></div>
<div class="r" style="left:0px;top:479px;width:25px;height:1px;background:#e1e1e1;"></div>
<div class="r" style="left:26px;top:498px;width:1318px;height:1px;background:#d4d4d4;"></div>
<div class="r" style="left:0px;top:498px;width:25px;height:1px;background:#e1e1e1;"></div>
<div class="r" style="left:26px;top:517px;width:1318px;height:1px;background:#d4d4d4;"></div>
<div class="r" style="left:0px;top:517px;width:25px;height:1px;background:#e1e1e1;"></div>
<div class="r" style="left:26px;top:536px;width:1318px;height:1px;background:#d4d4d4;"></div>
<div class="r" style="left:0px;top:536px;width:25px;height:1px;background:#e1e1e1;"></div>
<div class="r" style="left:26px;top:555px;width:1318px;height:1px;background:#d4d4d4;"></div>
<div class="r" style="left:0px;top:555px;width:25px;height:1px;background:#e1e1e1;"></div>
<div class="r" style="left:26px;top:574px;width:1318px;height:1px;background:#d4d4d4;"></div>
<div class="r" style="left:0px;top:574px;width:25px;height:1px;background:#e1e1e1;"></div>
<div class="r" style="left:26px;top:593px;width:1318px;height:1px;background:#d4d4d4;"></div>
<div class="r" style="left:0px;top:593px;width:25px;height:1px;background:#e1e1e1;"></div>
<div class="r" style="left:26px;top:612px;width:1318px;height:1px;background:#d4d4d4;"></div>
<div class="r" style="left:0px;top:612px;width:25px;height:1px;background:#e1e1e1;"></div>
<div class="r" style="left:26px;top:631px;width:1318px;height:1px;background:#d4d4d4;"></div>
<div class="r" style="left:0px;top:631px;width:25px;height:1px;background:#e1e1e1;"></div>
<div class="r" style="left:26px;top:650px;width:1318px;height:1px;background:#d4d4d4;"></div>
<div class="r" style="left:0px;top:650px;width:25px;height:1px;background:#e1e1e1;"></div>
<div class="r" style="left:26px;top:669px;width:1318px;height:1px;background:#d4d4d4;"></div>
<div class="r" style="left:0px;top:669px;width:25px;height:1px;background:#e1e1e1;"></div>
<div class="r" style="left:96px;top:290px;width:1px;height:380px;background:#d4d4d4;"></div>
<div class="r" style="left:148px;top:290px;width:1px;height:380px;background:#d4d4d4;"></div>
<div class="r" style="left:219px;top:290px;width:1px;height:380px;background:#d4d4d4;"></div>
<div class="r" style="left:266px;top:290px;width:1px;height:380px;background:#d4d4d4;"></div>
<div class="r" style="left:308px;top:290px;width:1px;height:380px;background:#d4d4d4;"></div>
<div class="r" style="left:453px;top:290px;width:1px;height:380px;background:#d4d4d4;"></div>
<div class="r" style="left:533px;top:290px;width:1px;height:380px;background:#d4d4d4;"></div>
<div class="r" style="left:944px;top:290px;width:1px;height:380px;background:#d4d4d4;"></div>
<div class="r" style="left:1024px;top:290px;width:1px;height:380px;background:#d4d4d4;"></div>
<div class="r" style="left:1104px;top:290px;width:1px;height:380px;background:#d4d4d4;"></div>
<div class="r" style="left:1184px;top:290px;width:1px;height:380px;background:#d4d4d4;"></div>
<div class="r" style="left:1264px;top:290px;width:1px;height:380px;background:#d4d4d4;"></div>
<div class="r" style="left:1344px;top:290px;width:1px;height:380px;background:#c6c6c6;"></div>
<div class="r" style="left:26px;top:479px;width:919px;height:20px;background:#ffffff;"></div>
<div class="r" style="left:26px;top:517px;width:919px;height:20px;background:#ffffff;"></div>
<div class="r" style="left:453px;top:574px;width:81px;height:20px;background:#ffffff;"></div>
<div class="r" style="left:453px;top:593px;width:81px;height:20px;background:#ffffff;"></div>
<div class="r" style="left:453px;top:631px;width:81px;height:20px;background:#ffffff;"></div>
<div class="r" style="left:453px;top:650px;width:81px;height:20px;background:#ffffff;"></div>
<div class="r" style="left:533px;top:347px;width:1px;height:18px;background:#ffffff;"></div>
<div class="r" style="left:26px;top:308px;width:919px;height:39px;background:#ffff00;"></div>
<div class="r" style="left:26px;top:498px;width:919px;height:20px;background:#ffff00;"></div>
<div class="r" style="left:26px;top:536px;width:919px;height:39px;background:#ffff00;"></div>
<div class="r" style="left:26px;top:403px;width:919px;height:58px;background:#bdd7ee;"></div>
<div class="r" style="left:26px;top:612px;width:919px;height:20px;background:#bdd7ee;"></div>
<div class="t" style="right:1343.5px;top:292.73px;font-size:14.5px;color:#444;transform:scaleX(0.75);transform-origin:right center;">760</div>
<div class="t" style="left:-238.0px;width:600px;text-align:center;top:292.62px;font-size:12.5px;color:#000;letter-spacing:0.35px;">21/7/2023</div>
<div class="t" style="left:-115.0px;width:600px;text-align:center;top:292.62px;font-size:12.5px;color:#000;letter-spacing:0.35px;">21/7/2023</div>
<div class="t" style="left:-57.0px;width:600px;text-align:center;top:292.62px;font-size:12.5px;color:#000;">7:58</div>
<div class="t" style="left:-12.5px;width:600px;text-align:center;top:292.62px;font-size:12.5px;color:#000;">17:01</div>
<div class="t" style="right:915px;top:292.65px;font-size:14px;color:#000;transform:scaleX(0.83);transform-origin:right center;">0:00</div>
<div class="t" style="left:456px;top:292.65px;font-size:14px;color:#000;transform:scaleX(0.925);transform-origin:left center;">VIERNES</div>
<div class="t" style="right:1343.5px;top:311.73px;font-size:14.5px;color:#444;transform:scaleX(0.75);transform-origin:right center;">761</div>
<div class="t" style="left:-238.0px;width:600px;text-align:center;top:311.62px;font-size:12.5px;color:#000;letter-spacing:0.35px;">24/7/2023</div>
<div class="t" style="left:-115.0px;width:600px;text-align:center;top:311.62px;font-size:12.5px;color:#000;letter-spacing:0.35px;">24/7/2023</div>
<div class="t" style="left:-57.0px;width:600px;text-align:center;top:311.62px;font-size:12.5px;color:#000;">8:09</div>
<div class="t" style="left:-12.5px;width:600px;text-align:center;top:311.62px;font-size:12.5px;color:#000;">0:00</div>
<div class="t" style="right:915px;top:312px;font-size:11.5px;color:#000;letter-spacing:0.07px;font-family:'Liberation Mono', monospace;transform:scaleY(1.3);transform-origin:right top;">####################</div>
<div class="t" style="left:456px;top:311.65px;font-size:14px;color:#000;transform:scaleX(0.925);transform-origin:left center;">LUNES</div>
<div class="t" style="left:536px;top:311.65px;font-size:14px;color:#000;transform:scaleX(0.953);transform-origin:left center;">OBSERVACIONES</div>
<div class="t" style="right:1343.5px;top:330.73px;font-size:14.5px;color:#444;transform:scaleX(0.75);transform-origin:right center;">762</div>
<div class="t" style="left:-238.0px;width:600px;text-align:center;top:330.62px;font-size:12.5px;color:#000;letter-spacing:0.35px;">25/7/2023</div>
<div class="t" style="left:-115.0px;width:600px;text-align:center;top:330.62px;font-size:12.5px;color:#000;letter-spacing:0.35px;">25/7/2023</div>
<div class="t" style="left:-57.0px;width:600px;text-align:center;top:330.62px;font-size:12.5px;color:#000;">7:46</div>
<div class="t" style="left:-12.5px;width:600px;text-align:center;top:330.62px;font-size:12.5px;color:#000;">0:00</div>
<div class="t" style="right:915px;top:331px;font-size:11.5px;color:#000;letter-spacing:0.07px;font-family:'Liberation Mono', monospace;transform:scaleY(1.3);transform-origin:right top;">####################</div>
<div class="t" style="left:456px;top:330.65px;font-size:14px;color:#000;transform:scaleX(0.925);transform-origin:left center;">MARTES</div>
<div class="t" style="left:536px;top:330.65px;font-size:14px;color:#000;transform:scaleX(0.953);transform-origin:left center;">OBSERVACIONES</div>
<div class="t" style="right:1343.5px;top:349.73px;font-size:14.5px;color:#444;transform:scaleX(0.75);transform-origin:right center;">763</div>
<div class="t" style="left:-238.0px;width:600px;text-align:center;top:349.62px;font-size:12.5px;color:#000;letter-spacing:0.35px;">26/7/2023</div>
<div class="t" style="left:-115.0px;width:600px;text-align:center;top:349.62px;font-size:12.5px;color:#000;letter-spacing:0.35px;">26/7/2023</div>
<div class="t" style="left:-57.0px;width:600px;text-align:center;top:349.62px;font-size:12.5px;color:#000;">7:58</div>
<div class="t" style="left:-12.5px;width:600px;text-align:center;top:349.62px;font-size:12.5px;color:#000;">17:03</div>
<div class="t" style="right:915px;top:349.65px;font-size:14px;color:#000;transform:scaleX(0.83);transform-origin:right center;">8:05</div>
<div class="t" style="left:456px;top:349.65px;font-size:14px;color:#000;transform:scaleX(0.925);transform-origin:left center;">MIERCOLES</div>
<div class="t" style="right:1343.5px;top:368.73px;font-size:14.5px;color:#444;transform:scaleX(0.75);transform-origin:right center;">764</div>
<div class="t" style="left:-238.0px;width:600px;text-align:center;top:368.62px;font-size:12.5px;color:#000;letter-spacing:0.35px;">27/7/2023</div>
<div class="t" style="left:-115.0px;width:600px;text-align:center;top:368.62px;font-size:12.5px;color:#000;letter-spacing:0.35px;">27/7/2023</div>
<div class="t" style="left:-57.0px;width:600px;text-align:center;top:368.62px;font-size:12.5px;color:#000;">8:04</div>
<div class="t" style="left:-12.5px;width:600px;text-align:center;top:368.62px;font-size:12.5px;color:#000;">17:01</div>
<div class="t" style="right:915px;top:368.65px;font-size:14px;color:#000;transform:scaleX(0.83);transform-origin:right center;">7:57</div>
<div class="t" style="left:456px;top:368.65px;font-size:14px;color:#000;transform:scaleX(0.925);transform-origin:left center;">JUEVES</div>
<div class="t" style="right:1343.5px;top:387.73px;font-size:14.5px;color:#444;transform:scaleX(0.75);transform-origin:right center;">765</div>
<div class="t" style="left:-238.0px;width:600px;text-align:center;top:387.62px;font-size:12.5px;color:#000;letter-spacing:0.35px;">28/7/2023</div>
<div class="t" style="left:-115.0px;width:600px;text-align:center;top:387.62px;font-size:12.5px;color:#000;letter-spacing:0.35px;">28/7/2023</div>
<div class="t" style="left:-57.0px;width:600px;text-align:center;top:387.62px;font-size:12.5px;color:#000;">7:59</div>
<div class="t" style="left:-12.5px;width:600px;text-align:center;top:387.62px;font-size:12.5px;color:#000;">17:02</div>
<div class="t" style="right:915px;top:387.65px;font-size:14px;color:#000;transform:scaleX(0.83);transform-origin:right center;">8:03</div>
<div class="t" style="left:456px;top:387.65px;font-size:14px;color:#000;transform:scaleX(0.925);transform-origin:left center;">VIERNES</div>
<div class="t" style="right:1343.5px;top:406.73px;font-size:14.5px;color:#444;transform:scaleX(0.75);transform-origin:right center;">766</div>
<div class="t" style="left:-238.0px;width:600px;text-align:center;top:406.62px;font-size:12.5px;color:#000;letter-spacing:0.35px;">29/7/2023</div>
<div class="t" style="left:-115.0px;width:600px;text-align:center;top:406.62px;font-size:12.5px;color:#000;letter-spacing:0.35px;">29/7/2023</div>
<div class="t" style="left:-57.0px;width:600px;text-align:center;top:406.62px;font-size:12.5px;color:#000;">8:00</div>
<div class="t" style="left:456px;top:407.44px;font-size:12px;color:#000;">SABADO</div>
<div class="t" style="left:536.3px;top:407.95px;font-size:11.4px;color:#000;">EVENTO DEPORTIVO, EXALTACIÓN DE LA REINA</div>
<div class="t" style="right:1343.5px;top:425.73px;font-size:14.5px;color:#444;transform:scaleX(0.75);transform-origin:right center;">767</div>
<div class="t" style="left:-238.0px;width:600px;text-align:center;top:425.62px;font-size:12.5px;color:#000;letter-spacing:0.35px;">30/7/2023</div>
<div class="t" style="left:-115.0px;width:600px;text-align:center;top:425.62px;font-size:12.5px;color:#000;letter-spacing:0.35px;">30/7/2023</div>
<div class="t" style="left:-57.0px;width:600px;text-align:center;top:425.62px;font-size:12.5px;color:#000;">8:00</div>
<div class="t" style="left:456px;top:426.44px;font-size:12px;color:#000;">DOMINGO</div>
<div class="t" style="left:536.3px;top:427.12px;font-size:11.2px;color:#000;">EXPOFERIA VALLE HERMOSO</div>
<div class="t" style="right:1343.5px;top:444.73px;font-size:14.5px;color:#444;transform:scaleX(0.75);transform-origin:right center;">768</div>
<div class="t" style="left:-238.0px;width:600px;text-align:center;top:444.62px;font-size:12.5px;color:#000;letter-spacing:0.35px;">31/7/2023</div>
<div class="t" style="left:-115.0px;width:600px;text-align:center;top:444.62px;font-size:12.5px;color:#000;letter-spacing:0.35px;">31/7/2023</div>
<div class="t" style="left:456px;top:445.44px;font-size:12px;color:#000;">LUNES</div>
<div class="t" style="left:536.3px;top:445.78px;font-size:11.6px;color:#000;">FERIADO POR LA PARROQUIALIZACION DE VH</div>
<div class="t" style="right:1343.5px;top:463.73px;font-size:14.5px;color:#444;transform:scaleX(0.75);transform-origin:right center;">769</div>
<div class="t" style="left:-238.0px;width:600px;text-align:center;top:463.62px;font-size:12.5px;color:#000;letter-spacing:0.35px;">1/8/2023</div>
<div class="t" style="left:-115.0px;width:600px;text-align:center;top:463.62px;font-size:12.5px;color:#000;letter-spacing:0.35px;">1/8/2023</div>
<div class="t" style="left:-57.0px;width:600px;text-align:center;top:463.62px;font-size:12.5px;color:#000;">8:05</div>
<div class="t" style="left:-12.5px;width:600px;text-align:center;top:463.62px;font-size:12.5px;color:#000;">17:02</div>
<div class="t" style="right:915px;top:463.65px;font-size:14px;color:#000;transform:scaleX(0.83);transform-origin:right center;">7:57</div>
<div class="t" style="left:456px;top:463.65px;font-size:14px;color:#000;transform:scaleX(0.925);transform-origin:left center;">MARTES</div>
<div class="t" style="left:536px;top:463.65px;font-size:14px;color:#000;transform:scaleX(0.953);transform-origin:left center;">SESION SOLEMNE</div>
<div class="t" style="right:1343.5px;top:482.73px;font-size:14.5px;color:#444;transform:scaleX(0.75);transform-origin:right center;">770</div>
<div class="t" style="left:-238.0px;width:600px;text-align:center;top:482.62px;font-size:12.5px;color:#000;letter-spacing:0.35px;">2/8/2023</div>
<div class="t" style="left:-115.0px;width:600px;text-align:center;top:482.62px;font-size:12.5px;color:#000;letter-spacing:0.35px;">2/8/2023</div>
<div class="t" style="left:-57.0px;width:600px;text-align:center;top:482.62px;font-size:12.5px;color:#000;">7:59</div>
<div class="t" style="left:-12.5px;width:600px;text-align:center;top:482.62px;font-size:12.5px;color:#000;">17:06</div>
<div class="t" style="right:915px;top:482.65px;font-size:14px;color:#000;transform:scaleX(0.83);transform-origin:right center;">8:07</div>
<div class="t" style="left:456px;top:482.65px;font-size:14px;color:#000;transform:scaleX(0.925);transform-origin:left center;">MIERCOLES</div>
<div class="t" style="right:1343.5px;top:501.73px;font-size:14.5px;color:#444;transform:scaleX(0.75);transform-origin:right center;">771</div>
<div class="t" style="left:-238.0px;width:600px;text-align:center;top:501.62px;font-size:12.5px;color:#000;letter-spacing:0.35px;">3/8/2023</div>
<div class="t" style="left:-115.0px;width:600px;text-align:center;top:501.62px;font-size:12.5px;color:#000;letter-spacing:0.35px;">3/8/2023</div>
<div class="t" style="left:-57.0px;width:600px;text-align:center;top:501.62px;font-size:12.5px;color:#000;">7:52</div>
<div class="t" style="left:-12.5px;width:600px;text-align:center;top:501.62px;font-size:12.5px;color:#000;">0:00</div>
<div class="t" style="right:915px;top:502px;font-size:11.5px;color:#000;letter-spacing:0.07px;font-family:'Liberation Mono', monospace;transform:scaleY(1.3);transform-origin:right top;">####################</div>
<div class="t" style="left:456px;top:501.65px;font-size:14px;color:#000;transform:scaleX(0.925);transform-origin:left center;">JUEVES</div>
<div class="t" style="left:536px;top:501.65px;font-size:14px;color:#000;transform:scaleX(0.953);transform-origin:left center;">OBSERVACIONES</div>
<div class="t" style="right:1343.5px;top:520.73px;font-size:14.5px;color:#444;transform:scaleX(0.75);transform-origin:right center;">772</div>
<div class="t" style="left:-238.0px;width:600px;text-align:center;top:520.62px;font-size:12.5px;color:#000;letter-spacing:0.35px;">4/8/2023</div>
<div class="t" style="left:-115.0px;width:600px;text-align:center;top:520.62px;font-size:12.5px;color:#000;letter-spacing:0.35px;">4/8/2023</div>
<div class="t" style="left:-57.0px;width:600px;text-align:center;top:520.62px;font-size:12.5px;color:#000;">13:26</div>
<div class="t" style="left:-12.5px;width:600px;text-align:center;top:520.62px;font-size:12.5px;color:#000;">17:05</div>
<div class="t" style="right:915px;top:520.65px;font-size:14px;color:#000;transform:scaleX(0.83);transform-origin:right center;">2:39</div>
<div class="t" style="left:456px;top:520.65px;font-size:14px;color:#000;transform:scaleX(0.925);transform-origin:left center;">VIERNES</div>
<div class="t" style="right:1343.5px;top:539.73px;font-size:14.5px;color:#444;transform:scaleX(0.75);transform-origin:right center;">773</div>
<div class="t" style="left:-238.0px;width:600px;text-align:center;top:539.62px;font-size:12.5px;color:#000;letter-spacing:0.35px;">7/8/2023</div>
<div class="t" style="left:-115.0px;width:600px;text-align:center;top:539.62px;font-size:12.5px;color:#000;letter-spacing:0.35px;">7/8/2023</div>
<div class="t" style="left:-57.0px;width:600px;text-align:center;top:539.62px;font-size:12.5px;color:#000;">7:49</div>
<div class="t" style="left:-12.5px;width:600px;text-align:center;top:539.62px;font-size:12.5px;color:#000;">0:00</div>
<div class="t" style="right:915px;top:540px;font-size:11.5px;color:#000;letter-spacing:0.07px;font-family:'Liberation Mono', monospace;transform:scaleY(1.3);transform-origin:right top;">####################</div>
<div class="t" style="left:456px;top:539.65px;font-size:14px;color:#000;transform:scaleX(0.925);transform-origin:left center;">LUNES</div>
<div class="t" style="left:536px;top:539.65px;font-size:14px;color:#000;transform:scaleX(0.953);transform-origin:left center;">OBSERVACIONES</div>
<div class="t" style="right:1343.5px;top:558.73px;font-size:14.5px;color:#444;transform:scaleX(0.75);transform-origin:right center;">774</div>
<div class="t" style="left:-238.0px;width:600px;text-align:center;top:558.62px;font-size:12.5px;color:#000;letter-spacing:0.35px;">8/8/2023</div>
<div class="t" style="left:-115.0px;width:600px;text-align:center;top:558.62px;font-size:12.5px;color:#000;letter-spacing:0.35px;">8/8/2023</div>
<div class="t" style="right:915px;top:559px;font-size:11.5px;color:#000;letter-spacing:0.07px;font-family:'Liberation Mono', monospace;transform:scaleY(1.3);transform-origin:right top;">####################</div>
<div class="t" style="left:456px;top:558.65px;font-size:14px;color:#000;transform:scaleX(0.925);transform-origin:left center;">MARTES</div>
<div class="t" style="left:536px;top:558.65px;font-size:14px;color:#000;transform:scaleX(0.953);transform-origin:left center;">OBSERVACIONES</div>
<div class="t" style="right:1343.5px;top:577.73px;font-size:14.5px;color:#444;transform:scaleX(0.75);transform-origin:right center;">775</div>
<div class="t" style="left:-238.0px;width:600px;text-align:center;top:577.62px;font-size:12.5px;color:#000;letter-spacing:0.35px;">9/8/2023</div>
<div class="t" style="left:-115.0px;width:600px;text-align:center;top:577.62px;font-size:12.5px;color:#000;letter-spacing:0.35px;">9/8/2023</div>
<div class="t" style="left:-57.0px;width:600px;text-align:center;top:577.62px;font-size:12.5px;color:#000;">7:51</div>
<div class="t" style="left:-12.5px;width:600px;text-align:center;top:577.62px;font-size:12.5px;color:#000;">17:03</div>
<div class="t" style="right:915px;top:577.65px;font-size:14px;color:#000;transform:scaleX(0.83);transform-origin:right center;">8:12</div>
<div class="t" style="left:456px;top:577.65px;font-size:14px;color:#000;transform:scaleX(0.925);transform-origin:left center;">MIERCOLES</div>
<div class="t" style="right:1343.5px;top:596.73px;font-size:14.5px;color:#444;transform:scaleX(0.75);transform-origin:right center;">776</div>
<div class="t" style="left:-238.0px;width:600px;text-align:center;top:596.62px;font-size:12.5px;color:#000;letter-spacing:0.35px;">10/8/2023</div>
<div class="t" style="left:-115.0px;width:600px;text-align:center;top:596.62px;font-size:12.5px;color:#000;letter-spacing:0.35px;">10/8/2023</div>
<div class="t" style="left:-57.0px;width:600px;text-align:center;top:596.62px;font-size:12.5px;color:#000;">7:56</div>
<div class="t" style="left:-12.5px;width:600px;text-align:center;top:596.62px;font-size:12.5px;color:#000;">17:10</div>
<div class="t" style="right:915px;top:596.65px;font-size:14px;color:#000;transform:scaleX(0.83);transform-origin:right center;">8:14</div>
<div class="t" style="left:456px;top:596.65px;font-size:14px;color:#000;transform:scaleX(0.925);transform-origin:left center;">JUEVES</div>
<div class="t" style="right:1343.5px;top:615.73px;font-size:14.5px;color:#444;transform:scaleX(0.75);transform-origin:right center;">777</div>
<div class="t" style="left:-238.0px;width:600px;text-align:center;top:615.62px;font-size:12.5px;color:#000;letter-spacing:0.35px;">11/8/2023</div>
<div class="t" style="left:-115.0px;width:600px;text-align:center;top:615.62px;font-size:12.5px;color:#000;letter-spacing:0.35px;">11/8/2023</div>
<div class="t" style="left:456px;top:616.44px;font-size:12px;color:#000;">VIERNES</div>
<div class="t" style="left:536.3px;top:616.36px;font-size:12.1px;color:#000;">FERIADO NACIONAL</div>
<div class="t" style="right:1343.5px;top:634.73px;font-size:14.5px;color:#444;transform:scaleX(0.75);transform-origin:right center;">778</div>
<div class="t" style="left:-238.0px;width:600px;text-align:center;top:634.62px;font-size:12.5px;color:#000;letter-spacing:0.35px;">14/8/2023</div>
<div class="t" style="left:-115.0px;width:600px;text-align:center;top:634.62px;font-size:12.5px;color:#000;letter-spacing:0.35px;">14/8/2023</div>
<div class="t" style="left:-57.0px;width:600px;text-align:center;top:634.62px;font-size:12.5px;color:#000;">8:03</div>
<div class="t" style="left:-12.5px;width:600px;text-align:center;top:634.62px;font-size:12.5px;color:#000;">17:01</div>
<div class="t" style="right:915px;top:634.65px;font-size:14px;color:#000;transform:scaleX(0.83);transform-origin:right center;">7:58</div>
<div class="t" style="left:456px;top:634.65px;font-size:14px;color:#000;transform:scaleX(0.925);transform-origin:left center;">LUNES</div>
<div class="t" style="right:1343.5px;top:653.73px;font-size:14.5px;color:#444;transform:scaleX(0.75);transform-origin:right center;">779</div>
<div class="t" style="left:-238.0px;width:600px;text-align:center;top:653.62px;font-size:12.5px;color:#000;letter-spacing:0.35px;">15/8/2023</div>
<div class="t" style="left:-115.0px;width:600px;text-align:center;top:653.62px;font-size:12.5px;color:#000;letter-spacing:0.35px;">15/8/2023</div>
<div class="t" style="left:-57.0px;width:600px;text-align:center;top:653.62px;font-size:12.5px;color:#000;">7:55</div>
<div class="t" style="left:-12.5px;width:600px;text-align:center;top:653.62px;font-size:12.5px;color:#000;">17:01</div>
<div class="t" style="right:915px;top:653.65px;font-size:14px;color:#000;transform:scaleX(0.83);transform-origin:right center;">8:06</div>
<div class="t" style="left:456px;top:653.65px;font-size:14px;color:#000;transform:scaleX(0.925);transform-origin:left center;">MARTES</div>
<svg class="s" style="left:309px;top:290px" width="7" height="7" viewBox="0 0 7 7"><path d="M0 0 H7 L0 7 Z" fill="#1e7b34"/></svg>
<div class="r" style="left:1345px;top:273px;width:21px;height:397px;background:#ffffff;"></div>
<div class="r" style="left:1347px;top:289px;width:19px;height:381px;background:#f0f0f0;"></div>
<div class="r" style="left:1348px;top:275px;width:13px;height:13px;background:#fff;border:1px solid #ababab"></div>
<svg class="s" style="left:1350px;top:278px" width="10" height="7" viewBox="0 0 10 7"><path d="M0.5 6 L5 1 L9.5 6 Z" fill="#222"/></svg>
<div class="r" style="left:1348px;top:388px;width:13px;height:15px;background:#fff;border:1px solid #ababab"></div>
<div class="r" style="left:1348px;top:656px;width:13px;height:13px;background:#fff;border:1px solid #ababab"></div>
<svg class="s" style="left:1350px;top:660px" width="10" height="7" viewBox="0 0 10 7"><path d="M0.5 1 L5 6 L9.5 1 Z" fill="#222"/></svg>
<div class="r" style="left:1337px;top:342px;width:36px;height:36px;border-radius:50%;background:#0d7de6;box-shadow:0 1px 3px rgba(0,0,0,0.35)"></div>
<svg class="s" style="left:1336px;top:341px" width="30" height="38" viewBox="0 0 30 38"><g fill="#fff"><path d="M7.5 13 L13 9.5 L18.5 13 L13 16.5 Z"/><path d="M19.5 13 L25 9.5 L30.5 13 L25 16.5 Z"/><path d="M7.5 20.5 L13 17 L18.5 20.5 L13 24 Z"/><path d="M19.5 20.5 L25 17 L30.5 20.5 L25 24 Z"/><path d="M13.5 27.5 L19 24.5 L24.5 27.5 L19 31 Z"/></g></svg>
<div class="r" style="left:0px;top:669px;width:1345px;height:1px;background:#d4d4d4;"></div>
<div class="r" style="left:0px;top:670px;width:1366px;height:28px;background:#f4f4f4;"></div>
<div class="r" style="left:0px;top:670px;width:1345px;height:1px;background:#ababab;"></div>
<svg class="s" style="left:26px;top:679px" width="7" height="9" viewBox="0 0 7 9"><path d="M5.5 0.5 V8.5 L1 4.5 Z" fill="#c0c0c0"/></svg>
<svg class="s" style="left:55px;top:679px" width="7" height="9" viewBox="0 0 7 9"><path d="M1 0.5 V8.5 L5.5 4.5 Z" fill="#c0c0c0"/></svg>
<div class="r" style="left:100px;top:671px;width:134px;height:22px;background:#fff;border-left:1px solid #ababab;border-right:1px solid #ababab"></div>
<div class="r" style="left:100px;top:693px;width:136px;height:2px;background:#217346;"></div>
<div class="t" style="left:112.8px;top:677.50px;font-size:12.4px;color:#217346;font-weight:bold;">Entradas y Salidas</div>
<div class="t" style="left:248.3px;top:677.59px;font-size:12.3px;color:#444;">Hoja1</div>
<div class="r" style="left:294px;top:675px;width:1px;height:18px;background:#c6c6c6;"></div>
<svg class="s" style="left:327px;top:675px" width="18" height="18" viewBox="0 0 18 18"><circle cx="9" cy="9" r="7.6" fill="none" stroke="#777" stroke-width="1.3"/><path d="M9 5 V13 M5 9 H13" stroke="#777" stroke-width="1.5"/></svg>
<div class="r" style="left:806px;top:670px;width:28px;height:28px;background:#ffffff;"></div>
<svg class="s" style="left:818px;top:679px" width="4" height="11" viewBox="0 0 4 11"><circle cx="2" cy="1" r="1" fill="#999"/><circle cx="2" cy="5" r="1" fill="#999"/><circle cx="2" cy="9" r="1" fill="#999"/></svg>
<div class="r" style="left:836px;top:677px;width:317px;height:13px;background:#fff;border:1px solid #ababab"></div>
<div class="r" style="left:850px;top:677px;width:1px;height:15px;background:#ababab;"></div>
<svg class="s" style="left:840px;top:680px" width="7" height="9" viewBox="0 0 7 9"><path d="M5.5 0.5 V8.5 L1 4.5 Z" fill="#222"/></svg>
<div class="r" style="left:1330px;top:677px;width:12px;height:13px;background:#fff;border:1px solid #ababab"></div>
<svg class="s" style="left:1334px;top:680px" width="7" height="9" viewBox="0 0 7 9"><path d="M1 0.5 V8.5 L5.5 4.5 Z" fill="#222"/></svg>
<div class="r" style="left:0px;top:698px;width:1366px;height:1px;background:#ffffff;"></div>
<div class="r" style="left:0px;top:699px;width:1366px;height:1px;background:#136a3a;"></div>
<div class="r" style="left:0px;top:700px;width:1366px;height:19px;background:#217346;"></div>
<div class="t" style="left:11px;top:704.52px;font-size:11.2px;color:#ffffff;">Listo</div>
<div class="t" style="left:51.4px;top:704.69px;font-size:11px;color:#ffffff;">Referencias circulares: F760</div>
<svg class="s" style="left:209px;top:703px" width="18" height="15" viewBox="0 0 18 15"><circle cx="5" cy="3" r="1.6" fill="none" stroke="#fff" stroke-width="1.1"/><path d="M1 6 H9 M5 6 V10 L2.5 14 M5 10 L7 12" fill="none" stroke="#fff" stroke-width="1.2"/><path d="M10 8 L16 14 M16 8 L10 14" stroke="#fff" stroke-width="1.6"/><path d="M8.5 2 A6 6 0 0 1 12 6" fill="none" stroke="#fff" stroke-width="1.1"/></svg>
<div class="t" style="left:229.3px;top:705.03px;font-size:10.6px;color:#ffffff;font-weight:bold;">Accesibilidad: es necesario investigar</div>
<div class="r" style="left:1066px;top:699px;width:40px;height:20px;background:#064c20;"></div>
<svg class="s" style="left:1078px;top:701px" width="16" height="16" viewBox="0 0 16 16"><rect x="1.5" y="1.5" width="13" height="13" fill="none" stroke="#fff" stroke-width="1.5"/><path d="M5.8 1.5 V14.5 M10.2 1.5 V14.5 M1.5 5.8 H14.5 M1.5 10.2 H14.5" stroke="#fff" stroke-width="1.3"/></svg>
<svg class="s" style="left:1118px;top:701px" width="16" height="16" viewBox="0 0 16 16"><rect x="1.5" y="1.5" width="13" height="13" fill="none" stroke="#fff" stroke-width="1.2"/><rect x="4.5" y="3.5" width="7" height="9" fill="none" stroke="#fff" stroke-width="1.2"/><path d="M6 6 H10 M6 8 H10 M6 10 H10" stroke="#fff" stroke-width="0.9"/></svg>
<svg class="s" style="left:1158px;top:701px" width="16" height="16" viewBox="0 0 16 16"><rect x="1.5" y="1.5" width="13" height="13" fill="none" stroke="#fff" stroke-width="1.2"/><rect x="2" y="2" width="4" height="7.5" fill="#eef2ee"/><rect x="6.5" y="2" width="3.5" height="7.5" fill="#eef2ee"/></svg>
<div class="r" style="left:1192px;top:708px;width:8px;height:1px;background:#fff;"></div>
<div class="r" style="left:1205px;top:708px;width:100px;height:1px;background:#fff;"></div>
<div class="r" style="left:1253px;top:703px;width:5px;height:12px;background:#fff;"></div>
<div class="r" style="left:1309px;top:708px;width:9px;height:1px;background:#fff;"></div>
<div class="r" style="left:1313px;top:704px;width:1px;height:9px;background:#fff;"></div>
<div class="t" style="left:1332px;top:704.69px;font-size:11px;color:#ffffff;">100%</div>
</body></html>
